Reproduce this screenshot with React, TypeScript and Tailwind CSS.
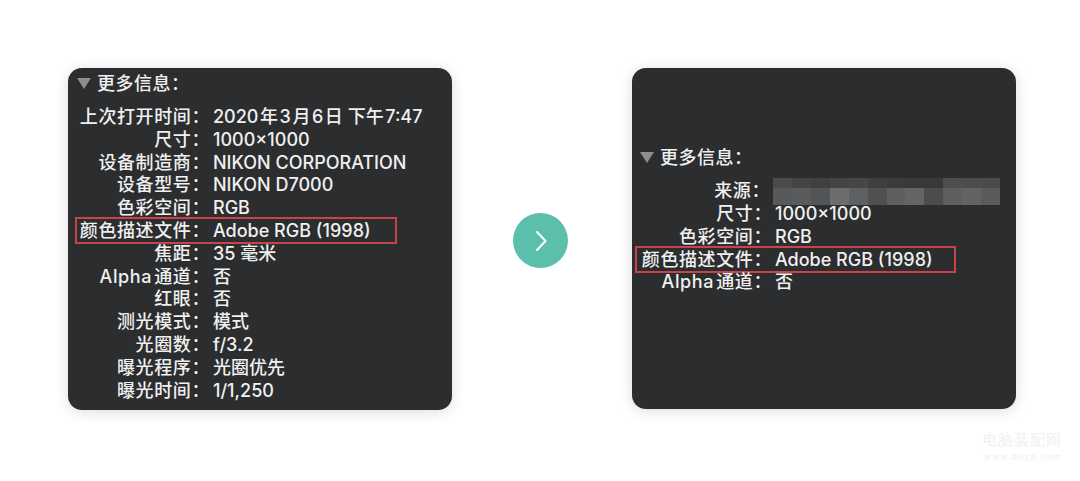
import React from 'react';

const font = { fontFamily: '"Inter", "Noto Sans CJK SC", sans-serif' };

type Row = { label: string; value: string; mark?: boolean };

// hair spaces stand in for the mac's automatic CJK/Latin spacing
const leftRows: Row[] = [
  { label: '上次打开时间：', value: '2020\u200A年\u200A3\u200A月\u200A6\u200A日 下午\u200A7:47' },
  { label: '尺寸：', value: '1000×1000' },
  { label: '设备制造商：', value: 'NIKON CORPORATION' },
  { label: '设备型号：', value: 'NIKON D7000' },
  { label: '色彩空间：', value: 'RGB' },
  { label: '颜色描述文件：', value: 'Adobe RGB (1998)', mark: true },
  { label: '焦距：', value: '35 毫米' },
  { label: 'Alpha\u200A通道：', value: '否' },
  { label: '红眼：', value: '否' },
  { label: '测光模式：', value: '模式' },
  { label: '光圈数：', value: 'f/3.2' },
  { label: '曝光程序：', value: '光圈优先' },
  { label: '曝光时间：', value: '1/1,250' },
];

const rightRows: Row[] = [
  { label: '尺寸：', value: '1000×1000' },
  { label: '色彩空间：', value: 'RGB' },
  { label: '颜色描述文件：', value: 'Adobe RGB (1998)', mark: true },
  { label: 'Alpha\u200A通道：', value: '否' },
];

const mosaicTop = ['#4a4b4d', '#434446', '#3f4042', '#434446', '#454648', '#3e3f41', '#3a3b3d', '#38393b', '#38393b', '#4d4e50', '#4b4c4e', '#4a4b4d'];
const mosaicBottom = ['#58595b', '#5a5b5d', '#535456', '#6c6d6f', '#5f6062', '#4f5052', '#5e5f61', '#646567', '#4b4c4e', '#5d5e60', '#626365', '#5a5b5d'];

function Header() {
  return (
    <div className="flex items-center leading-[23px] text-[18px] font-medium text-[#f0f0f0]">
      <svg width="14" height="11" viewBox="0 0 14 11" className="mr-[6px]">
        <polygon points="0,0 14,0 7,11" fill="#8d8e90" />
      </svg>
      <span className="tracking-[0.5px]">更多信息：</span>
    </div>
  );
}

function InfoRow({ row, labelW, markClass }: { row: Row; labelW: string; markClass: string }) {
  return (
    <div className="relative flex leading-[22.8px] text-[18px] font-medium text-[#f0f0f0] whitespace-nowrap">
      <div className={`${labelW} shrink-0 text-right tracking-[0.6px]`}>{row.label}</div>
      <div className="pl-[3px]">{row.value}</div>
      {row.mark && <div className={`absolute border-2 border-[#c8434a] ${markClass}`} />}
    </div>
  );
}

export default function App() {
  return (
    <div style={font} className="relative w-[1080px] h-[481px] bg-white flex items-start pt-[68px] pl-[68px] overflow-hidden">
      <div className="w-[384px] h-[342px] shrink-0 rounded-[14px] bg-[#2c2d2f] shadow-[0_2px_14px_rgba(0,0,0,0.14)] pt-[4px]">
        <div className="pl-[9px]">
          <Header />
        </div>
        <div className="mt-[11px]">
          {leftRows.map((r) => (
            <InfoRow key={r.label} row={r} labelW="w-[142px]" markClass="left-[7px] w-[322px] -top-[3px] h-[27px]" />
          ))}
        </div>
      </div>

      <div className="ml-[61px] mt-[145px] w-[55px] h-[55px] shrink-0 rounded-full bg-[#5cbfac] flex items-center justify-center">
        <svg width="16" height="24" viewBox="0 0 16 24" fill="none">
          <path d="M4 3 L12.5 12 L4 21" stroke="#ffffff" strokeWidth="2" strokeLinecap="round" strokeLinejoin="round" />
        </svg>
      </div>

      <div className="ml-[64px] w-[384px] h-[341px] shrink-0 rounded-[14px] bg-[#2c2d2f] shadow-[0_2px_14px_rgba(0,0,0,0.14)] pt-[78px]">
        <div className="pl-[8px]">
          <Header />
        </div>
        <div className="mt-[11px]">
          <div className="flex leading-[22.8px] text-[18px] font-medium text-[#f0f0f0] whitespace-nowrap">
            <div className="w-[138px] shrink-0 text-right tracking-[0.6px]">来源：</div>
            <div className="ml-[3px] -mt-[2.5px] -mb-[1.5px] flex flex-col w-[227px] h-[27px]">
              <div className="flex h-[10px]">
                {mosaicTop.map((c, i) => (
                  <div key={i} className="flex-1" style={{ backgroundColor: c }} />
                ))}
              </div>
              <div className="flex h-[17px]">
                {mosaicBottom.map((c, i) => (
                  <div key={i} className="flex-1" style={{ backgroundColor: c }} />
                ))}
              </div>
            </div>
          </div>
          {rightRows.map((r) => (
            <InfoRow key={r.label} row={r} labelW="w-[140px]" markClass="left-[3px] w-[321px] -top-[3px] h-[27px]" />
          ))}
        </div>
      </div>

      <div className="absolute right-[18px] bottom-[20px] flex flex-col items-end text-[#f0f0f0] leading-none">
        <span className="text-[15px] tracking-[1px]">电脑装配网</span>
        <span className="text-[9px] mt-[5px] tracking-[1px]">www.dnzp.com</span>
      </div>
    </div>
  );
}
